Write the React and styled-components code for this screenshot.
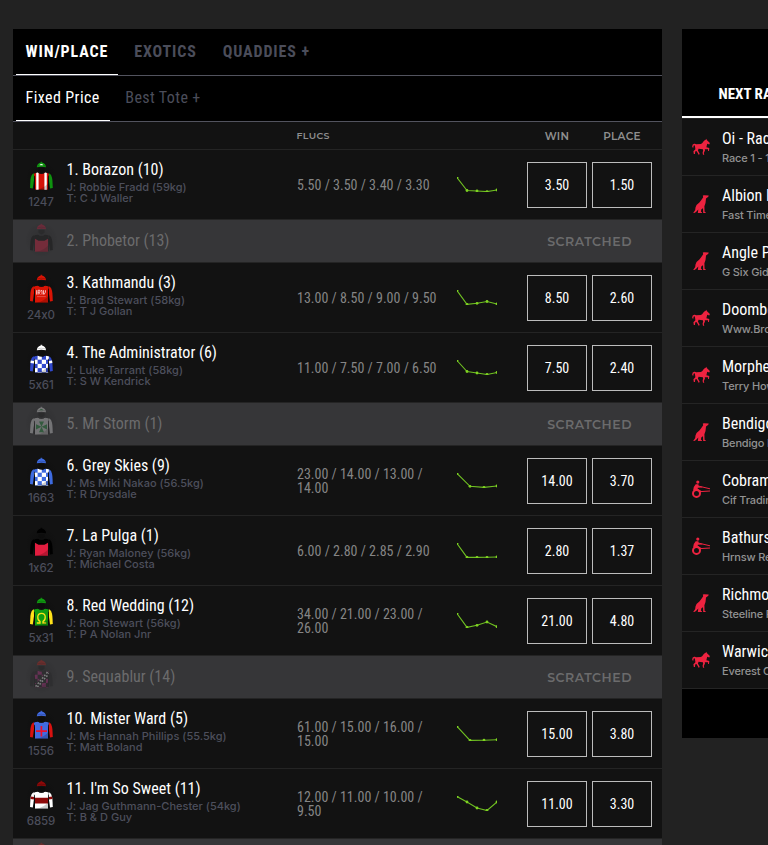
import React from "react";
import styled, { createGlobalStyle, css } from "styled-components";

const condensed = `"Roboto Condensed", Roboto, sans-serif`;
const geometric = `Montserrat, Lato, sans-serif`;
const inter = `Inter, "Open Sans", sans-serif`;

const GlobalStyle = createGlobalStyle`
  *, *::before, *::after { box-sizing: border-box; }
  html, body { margin: 0; height: 100%; overflow: hidden; background: #222; }
`;

const Page = styled.div`
  display: grid;
  grid-template-columns: 649px 280px;
  align-items: start;
  column-gap: 20px;
  height: 845px;
  padding: 29px 0 0 13px;
  overflow: hidden;
  background: #222;
  color: #fff;
`;

const RacePanel = styled.main`
  background: #121212;
`;

const TabBar = styled.nav`
  display: flex;
  gap: ${(p) => (p.$secondary ? 6 : 6.6)}px;
  height: ${(p) => (p.$secondary ? 46 : 47)}px;
  padding-left: 3px;
  border-bottom: 1px solid #52535e;
  background: #000;
`;

const Tab = styled.a`
  display: flex;
  align-items: center;
  padding: 0 ${(p) => (p.$secondary ? 10 : 9.6)}px 0 9.6px;
  border-bottom: 1px solid ${(p) => (p.$active ? "#fff" : "transparent")};
  color: ${(p) => (p.$active ? "#fff" : "#4b4d5a")};
  font: ${(p) => (p.$secondary ? 400 : 700)} 16px/20px ${condensed};
  letter-spacing: ${(p) => (p.$secondary ? 0.4 : 0.9)}px;
`;

const HeaderRow = styled.div`
  display: flex;
  align-items: center;
  height: 28px;
  padding: 2px 10px 0 283.5px;
  border-bottom: 1px solid #242424;
  color: #8f8f8f;
  font: 600 10.5px/14px ${geometric};
  letter-spacing: 0.3px;
`;

const FlucsHeading = styled.span`
  flex: 1;
  padding-bottom: 1px;
  font-size: 9.4px;
  letter-spacing: 0.35px;
`;

const PriceHeading = styled.span`
  width: 60px;
  margin-left: 5px;
  text-align: center;
`;

const RunnerRow = styled.div`
  display: flex;
  align-items: center;
  height: ${(p) => (p.$scratched ? 43 : 70)}px;
  padding: 0 10px 0 15px;
  border-bottom: 1px solid #242424;
  overflow: hidden;
  background: ${(p) => (p.$scratched ? "#363638" : "#121212")};
`;

const SilkCell = styled.div`
  display: flex;
  flex-direction: column;
  align-items: center;
  align-self: flex-start;
  width: 26px;
  padding-top: ${(p) => (p.$scratched ? 2 : 10)}px;
  opacity: ${(p) => (p.$scratched ? 0.36 : 1)};
`;

const SilkSvg = styled.svg`
  display: block;
  width: 26px;
  height: 34px;
  margin-left: 2px;
  flex: none;
  overflow: visible;
`;

const Form = styled.span`
  color: #4b4d5a;
  font: 500 11.5px/16px ${inter};
  font-feature-settings: "calt" 0;
  letter-spacing: -0.1px;
`;

const Runner = styled.div`
  width: 230px;
  margin: 0 0.5px 0 12.5px;
  ${(p) => !p.$scratched && css`
    align-self: flex-start;
    padding-top: 10px;
  `}
`;

const RunnerName = styled.div`
  color: ${(p) => (p.$scratched ? "#6b6b6c" : "#fff")};
  font: 400 16px/20px ${condensed};
  white-space: nowrap;
`;

const Connections = styled.div`
  padding-top: 2px;
`;

const Connection = styled.div`
  color: #4d4f5c;
  font: 500 11px/11px ${inter};
  font-feature-settings: "calt" 0;
  letter-spacing: 0.02px;
  white-space: nowrap;
`;

const Flucs = styled.div`
  width: 145px;
  margin-right: 15px;
  color: #858585;
  font: 400 14px/14px ${condensed};
`;

const Spark = styled.svg`
  display: block;
  width: 40px;
  height: 15px;
`;

const Prices = styled.div`
  display: flex;
  gap: 5px;
  margin-left: auto;
`;

const PriceButton = styled.button`
  width: 60px;
  height: 46px;
  padding: 0;
  border: 1px solid #bcbcbc;
  background: #121212;
  color: #fff;
  font: 400 14px/16px ${condensed};
`;

const Scratched = styled.span`
  margin-left: auto;
  padding: 2px 20px 0 0;
  color: #6b6b6c;
  font: 600 12.5px/16px ${geometric};
  letter-spacing: 0.52px;
`;

const NextPanel = styled.aside`
  height: 709px;
  background: #000;
`;

const NextHeader = styled.div`
  display: flex;
  align-items: flex-end;
  height: 89px;
  padding: 0 0 12px 36.5px;
  border-bottom: 2px solid #fff;
  font: 700 15px/20px ${condensed};
`;

const NextList = styled.div`
  border-top: 1px solid #242424;
`;

const NextItem = styled.div`
  display: flex;
  align-items: center;
  height: 57px;
  padding-left: 10px;
  border-bottom: 1px solid #242424;
  background: #121212;
`;

const BreedIcon = styled.svg`
  width: 18px;
  height: 18px;
  margin: 0 12px 0 0;
  fill: #ee2340;
  stroke: #ee2340;
  stroke-width: 0;
`;

const NextText = styled.div`
  padding-top: 2px;
  white-space: nowrap;
`;

const NextTitle = styled.div`
  font: 400 16px/20px ${condensed};
`;

const NextSub = styled.div`
  color: #929292;
  font: 500 11px/18px ${inter};
  letter-spacing: -0.15px;
`;

const bodyPath = "M4.7 13.4 8.7 12.6Q12.4 15 16.2 12.6L20 13.4 19 20 19.2 29.8H6L6 20Z";
const leftSleeve = "M4.9 13.3Q2 14.5 1.4 20L1 28 3.8 28.4 5 20Z";
const rightSleeve = "M19.9 13.3Q22.8 14.5 23.4 20L23.8 28 21 28.4 19.9 20Z";

function Checks({ color, size = 4.2, x = 4.4 }) {
  const cells = [];
  for (let r = 0; r < 5; r++)
    for (let c = 0; c < 4; c++)
      if ((r + c) % 2 === 1)
        cells.push(<rect key={`${r}-${c}`} x={x + c * size} y={12.5 + r * size} width={size} height={size} fill={color} />);
  return <>{cells}</>;
}

const patterns = {
  stripes: <path d="M8.4 12v18M16.6 12v18" stroke="#fff" strokeWidth="2.4" />,
  redChest: <path d="M6 16.8 9.5 18.7H15.5L19 16.8V30H5.3Z" fill="#e11d3f" />,
  sponsor: (
    <g stroke="#f8b8b8" strokeWidth="1" fill="none">
      <path d="M7.6 17.2v4.4M9.1 17.2v4.4M9 17.3h2v2H9l2.2 2.2M13 21.5v-4h-1M14.5 17.2v4.2M16.4 17.2v2l-1.4 2.4" />
      <path d="M8 23.6h8.8" strokeWidth=".6" opacity=".6" />
    </g>
  ),
  checks: <Checks color="#fff" />,
  cross: (
    <path fill="#2e9a4a" d="M12.5 21.8 10 16.4h5Z M12.5 21.8 10 27.2h5Z M12.5 21.8 7 19.2v5.2Z M12.5 21.8 18 19.2v5.2Z" />
  ),
  omega: (
    <path d="M7.8 27h3.2v-1.6C8 23.8 7.6 17.3 12.5 17.3S17 23.8 14 25.4V27h3.2" fill="none" stroke="#ffe21a" strokeWidth="1.3" />
  ),
  sash: (
    <g>
      <Checks color="#b52a84" />
      <path d="M7 29 20 14" stroke="#222" strokeWidth="4.6" />
      <path d="M6.6 28.5 19 13.5M8.4 29 20.5 15" stroke="#fff" strokeWidth="1.5" strokeDasharray="1.7 1.7" />
    </g>
  ),
  redCross: <path d="M12.4 17v10.6M7 22.2h11" stroke="#e8112d" strokeWidth="1.7" />,
  band: <path d="M5 18.8h15v5.6H5Z" fill="#8c0909" />,
};

function Silk({ id, silk }) {
  const { cap, body, sleeve, pattern, peak, armband } = silk;
  return (
    <SilkSvg viewBox="0 0 26 34">
      <defs>
        <clipPath id={`body-${id}`}><path d={bodyPath} /></clipPath>
        <radialGradient id={`glow-${id}`}>
          <stop offset=".4" stopColor="#070707" stopOpacity=".75" />
          <stop offset="1" stopColor="#070707" stopOpacity="0" />
        </radialGradient>
      </defs>
      <ellipse cx="12.5" cy="18" rx="16" ry="17" fill={`url(#glow-${id})`} opacity=".35" />
      <path d="M9.4 8h6.2v2.6q-3.1 3.6-6.2 0Z" fill="#0b0b0b" opacity=".6" />
      <path d="M7.8 7.2Q8 2.8 12.4 2.4Q16.8 2.8 17 7.2Q12.4 6.2 7.8 7.2Z" fill={cap} />
      <path d="M8.2 5.9Q12.4 4.5 16.6 5.9" fill="none" stroke="#000" strokeOpacity=".28" strokeWidth=".7" />
      {peak && <path d="M10.4 5.2Q12.4 3 14.4 5.2Z" fill={peak} />}
      <path d="M11.6 1.8h1.6v1h-1.6Z" fill={cap} />
      <path d={leftSleeve} fill={sleeve} />
      <path d={rightSleeve} fill={sleeve} />
      {armband && <path d="M1.6 18.8 5 19.2M23.2 18.8 19.9 19.2" stroke={armband} strokeWidth="2.6" />}
      <g clipPath={`url(#body-${id})`}>
        <path d={bodyPath} fill={body} />
        {patterns[pattern]}
        <path d="M20 22V30H7Q16 28 20 22Z" fill="#000" opacity=".2" />
      </g>
      <path d="M5.5 16V29M19.5 16V29" stroke="#000" strokeWidth=".9" opacity=".5" />
    </SilkSvg>
  );
}

const runners = [
  { name: "1. Borazon (10)", form: "1247", j: "Robbie Fradd (59kg)", t: "C J Waller", flucs: "5.50 / 3.50 / 3.40 / 3.30", win: "3.50", place: "1.50", pts: [[0, 0.5], [10, 13.5], [20, 14], [30, 14.6], [40, 13]], silk: { cap: "#119c11", body: "#d31208", sleeve: "#0f930f", pattern: "stripes", peak: "#fff" } },
  { name: "2. Phobetor (13)", scratched: true, silk: { cap: "#c41a3e", body: "#0a0a0a", sleeve: "#0a0a0a", pattern: "redChest" } },
  { name: "3. Kathmandu (3)", form: "24x0", j: "Brad Stewart (58kg)", t: "T J Gollan", flucs: "13.00 / 8.50 / 9.00 / 9.50", win: "8.50", place: "2.60", pts: [[0, 0.5], [10, 14.4], [20, 13.3], [30, 11.5], [40, 14]], silk: { cap: "#d91405", body: "#d91405", sleeve: "#d91405", pattern: "sponsor" } },
  { name: "4. The Administrator (6)", form: "5x61", j: "Luke Tarrant (58kg)", t: "S W Kendrick", flucs: "11.00 / 7.50 / 7.00 / 6.50", win: "7.50", place: "2.40", pts: [[0, 0.5], [10, 11.5], [20, 13], [30, 14.5], [40, 12.5]], silk: { cap: "#fff", body: "#3048cc", sleeve: "#3048cc", pattern: "checks", armband: "#fff" } },
  { name: "5. Mr Storm (1)", scratched: true, silk: { cap: "#e8e8e8", body: "#e0e0e0", sleeve: "#e0e0e0", pattern: "cross", peak: "#2e9a4a" } },
  { name: "6. Grey Skies (9)", form: "1663", j: "Ms Miki Nakao (56.5kg)", t: "R Drysdale", flucs: "23.00 / 14.00 / 13.00 / 14.00", win: "14.00", place: "3.70", pts: [[0, 0.5], [13, 13.3], [27, 14.4], [40, 13]], silk: { cap: "#3e6be0", body: "#3e6be0", sleeve: "#3e6be0", pattern: "checks" } },
  { name: "7. La Pulga (1)", form: "1x62", j: "Ryan Maloney (56kg)", t: "Michael Costa", flucs: "6.00 / 2.80 / 2.85 / 2.90", win: "2.80", place: "1.37", pts: [[0, 0.5], [10, 14.4], [20, 14.4], [30, 14.3], [40, 14]], silk: { cap: "#000", body: "#000", sleeve: "#000", pattern: "redChest" } },
  { name: "8. Red Wedding (12)", form: "5x31", j: "Ron Stewart (56kg)", t: "P A Nolan Jnr", flucs: "34.00 / 21.00 / 23.00 / 26.00", win: "21.00", place: "4.80", pts: [[0, 0.5], [10, 14.4], [20, 12.3], [30, 9], [40, 13.7]], silk: { cap: "#119c11", body: "#119c11", sleeve: "#ffe21a", pattern: "omega" } },
  { name: "9. Sequablur (14)", scratched: true, silk: { cap: "#c4201a", body: "#222", sleeve: "#222", pattern: "sash" } },
  { name: "10. Mister Ward (5)", form: "1556", j: "Ms Hannah Phillips (55.5kg)", t: "Matt Boland", flucs: "61.00 / 15.00 / 16.00 / 15.00", win: "15.00", place: "3.80", pts: [[0, 0.5], [13, 14.4], [27, 14.2], [40, 13.7]], silk: { cap: "#416ae0", body: "#416ae0", sleeve: "#d81210", pattern: "redCross" } },
  { name: "11. I'm So Sweet (11)", form: "6859", j: "Jag Guthmann-Chester (54kg)", t: "B & D Guy", flucs: "12.00 / 11.00 / 10.00 / 9.50", win: "11.00", place: "3.30", pts: [[0, 0.5], [10, 6], [20, 12], [30, 14.5], [40, 6]], silk: { cap: "#8c0909", body: "#fff", sleeve: "#fff", pattern: "band", armband: "#8c0909" } },
  { name: "", scratched: true, silk: { cap: "#c4201a", body: "#222", sleeve: "#222" } },
];

const breeds = {
  horse: (
    <path d="M.3 9.2Q-.2 6.2 2.2 5.8Q3.6 5.6 4.2 6.2L9 6Q10.5 5.4 11.4 3.5Q12.2 2.2 13.7 1.8L14.2.8 15 2.3 17.9 5 17.3 6.4 15.2 5.8 14.4 9.3 17.3 10 17 13 16.1 12.9 16 11.3 12.8 11.2 13 12.4 11.8 15 12.3 16.8H11L10.6 14.8 11.2 12.3 10.8 11.3 6.6 10.8 5.9 12.6 7.6 15.4 7.4 16.5H6.2L6.1 15.5 4.4 13 3.2 13.6 3 15.9H1.8L1.4 13.3 3.4 11.3 3 8.4 2.8 7.4Q1.3 7 1.3 9.8Z" />
  ),
  dog: (
    <path d="M10.8.5 12.2.2 16.7.4 16.3 1.8 14 3.4 13.5 8 12.4 11.2 12.6 16.8 13.8 17.6V18H11.2L11 13.2 9.4 14.2 8.9 16.5 10 17.5V18H5.8L6.3 14.5 4 17 2.3 18H1.2L3.2 15 3.5 12.6Q3.8 9.8 7.4 7.5L9.5 4.8 11.2 2.2Z" />
  ),
  harness: (
    <g>
      <circle cx="5.8" cy="2.1" r="1.6" />
      <path d="M3.7 4.2H6.3L7 6.2 10.2 6.7V7.6L5.8 7.7 5.7 8.8 9.4 10.9 8.4 13.2 6.5 10.7 1.2 9.9Q1.6 6.2 3.7 4.2Z" />
      <circle cx="4.5" cy="13.4" r="3.5" fill="none" strokeWidth="2" />
      <path d="M7 6.2 18 8.8M8.5 11.6 18 11" fill="none" strokeWidth="1" />
    </g>
  ),
};

const nextRaces = [
  ["horse", "Oi - Race 1", "Race 1 - 1600m"],
  ["dog", "Albion Park", "Fast Times"],
  ["dog", "Angle Park", "G Six Gideon"],
  ["horse", "Doomben", "Www.Brc.Com.Au"],
  ["horse", "Morphettville", "Terry Howe"],
  ["dog", "Bendigo", "Bendigo Bank"],
  ["harness", "Cobram", "Cif Trading"],
  ["harness", "Bathurst", "Hrnsw Rewards"],
  ["dog", "Richmond", "Steeline Penrith"],
  ["horse", "Warwick Farm", "Everest Carnival"],
];

function Sparkline({ pts }) {
  return (
    <Spark viewBox="0 0 40 15">
      <polyline points={pts.map((p) => p.join(",")).join(" ")} fill="none" stroke="#6fbf22" strokeWidth="1.1" />
      {pts.map(([x, y]) => <circle key={x} cx={x} cy={y} r="1.4" fill="#7ed321" />)}
    </Spark>
  );
}

export default function App() {
  return (
    <>
      <GlobalStyle />
      <Page>
        <RacePanel>
          <TabBar>
            <Tab $active>WIN/PLACE</Tab>
            <Tab>EXOTICS</Tab>
            <Tab>QUADDIES +</Tab>
          </TabBar>
          <TabBar $secondary>
            <Tab $secondary $active>Fixed Price</Tab>
            <Tab $secondary>Best Tote +</Tab>
          </TabBar>
          <HeaderRow>
            <FlucsHeading>FLUCS</FlucsHeading>
            <PriceHeading>WIN</PriceHeading>
            <PriceHeading>PLACE</PriceHeading>
          </HeaderRow>
          {runners.map((r, i) => (
            <RunnerRow key={i} $scratched={r.scratched}>
              <SilkCell $scratched={r.scratched}>
                <Silk id={i} silk={r.silk} />
                {r.form && <Form>{r.form}</Form>}
              </SilkCell>
              <Runner $scratched={r.scratched}>
                <RunnerName $scratched={r.scratched}>{r.name}</RunnerName>
                {!r.scratched && (
                  <Connections>
                    <Connection>J: {r.j}</Connection>
                    <Connection>T: {r.t}</Connection>
                  </Connections>
                )}
              </Runner>
              {r.scratched ? (
                r.name && <Scratched>SCRATCHED</Scratched>
              ) : (
                <>
                  <Flucs>{r.flucs}</Flucs>
                  <Sparkline pts={r.pts} />
                  <Prices>
                    <PriceButton>{r.win}</PriceButton>
                    <PriceButton>{r.place}</PriceButton>
                  </Prices>
                </>
              )}
            </RunnerRow>
          ))}
        </RacePanel>
        <NextPanel>
          <NextHeader>NEXT RACES</NextHeader>
          <NextList>
            {nextRaces.map(([breed, title, sub]) => (
              <NextItem key={title}>
                <BreedIcon viewBox="0 0 18 18">{breeds[breed]}</BreedIcon>
                <NextText>
                  <NextTitle>{title}</NextTitle>
                  <NextSub>{sub}</NextSub>
                </NextText>
              </NextItem>
            ))}
          </NextList>
        </NextPanel>
      </Page>
    </>
  );
}
